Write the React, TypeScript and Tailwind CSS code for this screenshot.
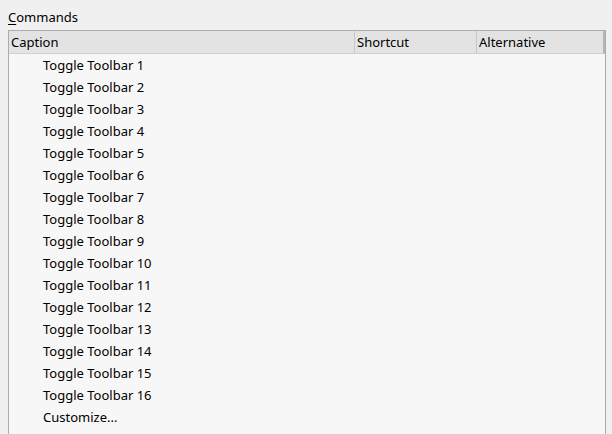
import React from "react";

const rows = [
  ...Array.from({ length: 16 }, (_, i) => `Toggle Toolbar ${i + 1}`),
  "Customize...",
];

export default function App() {
  return (
    <div
      className="w-[612px] h-[434px] overflow-hidden bg-[#f0f0f0] text-[13px] text-black"
      style={{ fontFamily: '"Segoe UI", "Noto Sans", "Open Sans", sans-serif' }}
    >
      <div className="pl-[8px] pt-[8px] h-[30px] leading-[18px]">
        <span className="underline underline-offset-2">C</span>ommands
      </div>
      <div className="ml-[8px] w-[598px] h-[420px] border border-[#adadad] bg-[#f7f7f7]">
        <div className="flex h-[23px] bg-[#e3e3e3] border-b border-[#cfcfcf] border-r-2 border-r-[#b5b5b5] leading-[22px]">
          <div className="w-[346px] pl-[2px] border-r border-[#c8c8c8]">Caption</div>
          <div className="w-[122px] pl-[2px] border-r border-[#c8c8c8]">Shortcut</div>
          <div className="flex-1 pl-[2px]">Alternative</div>
        </div>
        <div className="flex flex-col">
          {rows.map((r) => (
            <div key={r} className="h-[22px] leading-[22px] pl-[34px]">
              {r}
            </div>
          ))}
        </div>
      </div>
    </div>
  );
}
